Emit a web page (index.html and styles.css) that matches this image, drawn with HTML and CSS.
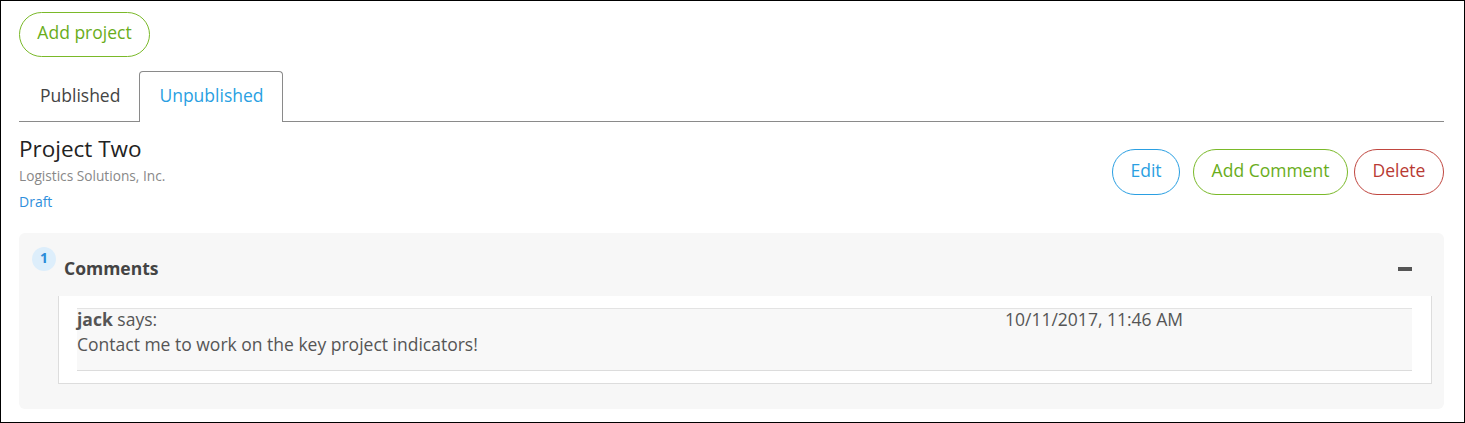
FILE: index.html
```html
<!DOCTYPE html>
<html lang="en">
<head>
<meta charset="utf-8">
<title>Projects</title>
<link rel="stylesheet" href="styles.css">
</head>
<body>
<div class="frame">
  <div class="top-actions">
    <button class="btn btn-green">Add project</button>
  </div>
  <ul class="tabs">
    <li class="tab">Published</li>
    <li class="tab tab-active">Unpublished</li>
  </ul>
  <div class="project-head">
    <div class="project-info">
      <h2 class="project-title">Project Two</h2>
      <div class="project-client">Logistics Solutions, Inc.</div>
      <div class="project-status">Draft</div>
    </div>
    <div class="project-actions">
      <button class="btn btn-blue">Edit</button>
      <button class="btn btn-green btn-comment">Add Comment</button>
      <button class="btn btn-red btn-delete">Delete</button>
    </div>
  </div>
  <div class="panel">
    <div class="panel-head">
      <span class="badge">1</span>
      <span class="panel-title">Comments</span>
      <span class="collapse"></span>
    </div>
    <div class="panel-body">
      <div class="comment">
        <div class="comment-meta">
          <div class="comment-author"><b>jack</b> says:</div>
          <div class="comment-date">10/11/2017, 11:46 AM</div>
        </div>
        <div class="comment-text">Contact me to work on the key project indicators!</div>
      </div>
    </div>
  </div>
</div>
</body>
</html>
```

FILE: styles.css
```css
* { box-sizing: border-box; }
html, body { margin: 0; padding: 0; background: #fff; }
body { font-family: "Open Sans", "Liberation Sans", sans-serif; color: #444; }

.frame {
  width: 1465px;
  height: 423px;
  border: 1px solid #000;
  padding: 11px 20px 0 18px;
}

.btn {
  font-family: "Open Sans", "Liberation Sans", sans-serif;
  font-size: 17.5px;
  background: #fff;
  border: 1px solid;
  border-radius: 23px;
  height: 45px;
  padding: 0 0 3px;
  cursor: pointer;
  line-height: 1;
}
.btn-green { color: #69ad1b; border-color: #7ab929; }
.btn-blue { color: #2a9fe2; border-color: #2a9fe2; }
.btn-red { color: #b83a33; border-color: #c0463f; }

.top-actions { display: flex; }
.top-actions .btn { width: 131px; }

.tabs {
  list-style: none;
  margin: 14px 0 0;
  padding: 0;
  display: flex;
  border-bottom: 1px solid #8a8a8a;
}
.tab {
  height: 50px;
  padding: 0 18px 4px 20px;
  display: flex;
  align-items: center;
  font-size: 17.5px;
  color: #444;
  border: 1px solid transparent;
  border-bottom: none;
  border-radius: 4px 4px 0 0;
  margin-bottom: -1px;
}
.tab-active {
  color: #2a9fe2;
  border-color: #8a8a8a;
  background: #fff;
  height: 51px;
  padding: 0 18px 5px 19px;
}

.project-head {
  display: flex;
  justify-content: space-between;
  align-items: flex-start;
  padding-top: 12px;
}
.project-title {
  margin: 0;
  font-size: 22.5px;
  font-weight: 400;
  color: #222;
  line-height: 29px;
}
.project-client {
  font-size: 13.7px;
  color: #888;
  line-height: 20px;
  margin-top: 3px;
}
.project-status {
  font-size: 14px;
  color: #2f8fdc;
  line-height: 18px;
  margin-top: 7px;
}
.project-actions {
  display: flex;
  padding-top: 15px;
}
.project-actions .btn { height: 46px; }
.btn-blue { width: 68px; }
.btn-comment { width: 155px; margin-left: 13px; }
.btn-delete { width: 90px; margin-left: 6px; }

.panel {
  margin-top: 22px;
  background: #f7f7f7;
  border-radius: 6px;
  padding: 14px 12px 25px 13px;
}
.panel-head {
  display: flex;
  align-items: flex-start;
  height: 49px;
}
.badge {
  width: 24px;
  height: 24px;
  border-radius: 50%;
  background: #ddeefb;
  color: #2a8ad8;
  font-size: 14px;
  font-weight: 700;
  display: flex;
  align-items: center;
  justify-content: center;
  line-height: 1;
  padding-bottom: 2px;
}
.panel-title {
  font-size: 17.5px;
  font-weight: 700;
  color: #444;
  margin-left: 8px;
  margin-top: 10px;
  line-height: 22px;
}
.collapse {
  margin-left: auto;
  margin-right: 20px;
  margin-top: 20px;
  width: 14px;
  height: 4px;
  background: #555;
}

.panel-body {
  margin-left: 26px;
  background: #fff;
  border: 1px solid #ddd;
  border-top: none;
  padding: 12px 19px 12px 18px;
}
.comment {
  background: #f8f8f8;
  border-top: 1px solid #e3e3e3;
  border-bottom: 1px solid #dcdcdc;
  padding: 0 0 13px;
  font-size: 17.5px;
  color: #555;
}
.comment-meta {
  display: grid;
  grid-template-columns: 928px 1fr;
  line-height: 21px;
}
.comment-author b { font-weight: 700; }
.comment-text { line-height: 25px; margin-top: 2px; }
```
